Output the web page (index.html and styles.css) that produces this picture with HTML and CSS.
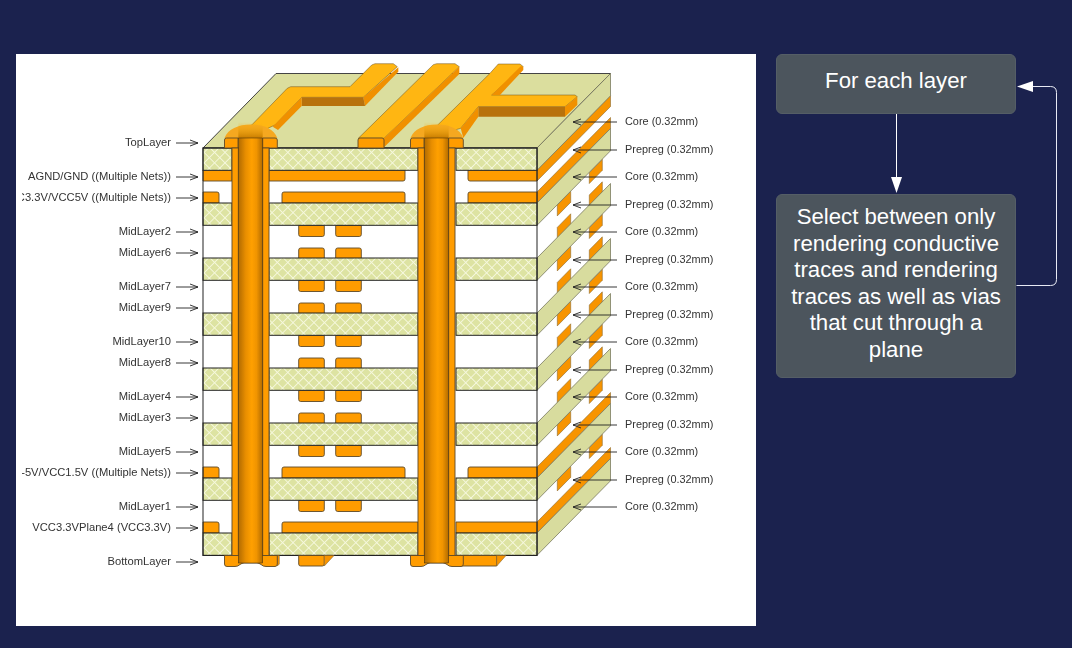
FILE: index.html
```html
<!DOCTYPE html>
<html lang="en">
<head>
<meta charset="utf-8">
<title>PCB layer rendering</title>
<link rel="stylesheet" href="styles.css">
</head>
<body>
<main class="page">
  <figure class="stack">
    <svg class="stack-svg" viewBox="16 54 740 572" width="740" height="572" xmlns="http://www.w3.org/2000/svg">
      <defs>
        <pattern id="hatch" width="7.4" height="7.4" patternUnits="userSpaceOnUse" patternTransform="rotate(45 0 0)">
          <rect width="7.4" height="7.4" fill="#dde3a2"/>
          <path d="M0 0H7.4M0 0V7.4" stroke="#f6f8de" stroke-width="1.8" fill="none"/>
        </pattern>
        <linearGradient id="barrel" x1="0" x2="1" y1="0" y2="0">
          <stop offset="0" stop-color="#b06a00"/>
          <stop offset="0.3" stop-color="#e88e00"/>
          <stop offset="0.55" stop-color="#ffa000"/>
          <stop offset="0.75" stop-color="#f09400"/>
          <stop offset="1" stop-color="#b06a00"/>
        </linearGradient>
        <linearGradient id="fade" x1="0" x2="0" y1="0" y2="1">
          <stop offset="0" stop-color="#ffb612" stop-opacity="0"/>
          <stop offset="1" stop-color="#c87c00"/>
        </linearGradient>
        <clipPath id="labelclip"><rect x="22" y="54" width="734" height="572"/></clipPath>
        <path id="pad-hang" class="copper" d="M0 0V9q0 2 2 2H23.6q2 0 2-2V0Z"/>
        <path id="pad-stand" class="copper" d="M0 11V2q0-2 2-2H23.6q2 0 2 2V11Z"/>
        <g id="pad-pair-hang">
          <use href="#pad-hang" x="298.7"/>
          <use href="#pad-hang" x="335.7"/>
        </g>
        <g id="pad-pair-stand">
          <use href="#pad-stand" x="298.7"/>
          <use href="#pad-stand" x="335.7"/>
        </g>
        <g id="side-pads">
          <polygon class="copper-side" points="557.3,-20.6 570.7,-34.2 570.7,-23.2 557.3,-9.6"/>
          <polygon class="copper-side" points="589.3,-53 602.3,-66.2 602.3,-55.2 589.3,-42"/>
        </g>
        <g id="side-pads-double">
          <use href="#side-pads" y="225.5"/>
          <use href="#side-pads" y="248"/>
        </g>
        <polygon id="side-strip" class="copper-side" points="537,0 610.5,-74.5 610.5,-63.5 537,11"/>
        <g id="core">
          <polygon class="core-side" points="537,148 610.5,73.5 610.5,95.8 537,170.3"/>
          <rect class="core-front" x="203" y="148" width="29" height="22.3" fill="url(#hatch)"/>
          <rect class="core-front" x="269" y="148" width="149" height="22.3" fill="url(#hatch)"/>
          <rect class="core-front" x="456" y="148" width="81" height="22.3" fill="url(#hatch)"/>
        </g>
        <g id="via">
          <path class="dome" d="M224.5 138C228 129 238 124.500 251 124.500C264 124.500 274 129 277.300 138Z"/>
          <path class="copper" d="M224.5 148V140q0-2 2-2H238V148Z"/>
          <path class="copper" d="M262.7 148V138H275q2.3 0 2.3 2V148Z"/>
          <rect x="238.300" y="122" width="24.400" height="16" fill="url(#fade)"/>
          <path class="copper" d="M224.500 555.500V564q0 2.500 2.500 2.500H235q3 0 5-2q2-1.500 4-1.500h13q2 0 4 1.500q2 2 5 2h9q2.300 0 2.300-2.500V555.500Z"/>
          <rect class="wall" x="232" y="148" width="6.300" height="407.500"/>
          <rect class="wall" x="262.700" y="148" width="6.300" height="407.500"/>
          <rect class="barrel-line" x="238.300" y="138" width="24.400" height="425" fill="url(#barrel)"/>
        </g>
        <path id="arrow-left-label" class="arrow" d="M176 0H198M190-3L198 0L190 3"/>
        <path id="arrow-right-label" class="arrow" d="M617 0H573M581-3L573 0L581 3"/>
      </defs>

      <rect class="sheet" x="16" y="54" width="740" height="572"/>

      <polygon class="surface" points="203,148 276,73.500 610.500,73.500 537,148"/>

      <use href="#side-strip" y="170"/>
      <use href="#side-strip" y="192"/>
      <use href="#side-strip" y="467"/>
      <use href="#side-strip" y="522"/>
      <use href="#side-pads-double"/>
      <use href="#side-pads-double" y="55"/>
      <use href="#side-pads-double" y="110"/>
      <use href="#side-pads-double" y="165"/>
      <use href="#side-pads" y="445.500"/>
      <use href="#side-pads" y="500.500"/>

      <path class="copper" d="M203 170H232V181H203Z"/>
      <path class="copper" d="M269 170H405V179q0 2-2 2H269Z"/>
      <path class="copper" d="M537 170V181H470q-2 0-2-2V170Z"/>
      <g id="lower-row">
        <path class="copper" d="M203 203V192H217q2 0 2 2V203Z"/>
        <path class="copper" d="M282 203V194q0-2 2-2H403q2 0 2 2V203Z"/>
        <path class="copper" d="M468 203V194q0-2 2-2H537V203Z"/>
      </g>
      <use href="#lower-row" y="275"/>
      <path class="copper" d="M203 533V522H217q2 0 2 2V533Z"/>
      <path class="copper" d="M282 533V524q0-2 2-2H418V533Z"/>
      <path class="copper" d="M456 522H537V533H456Z"/>

      <use href="#pad-pair-hang" y="225.500"/>
      <use href="#pad-pair-stand" y="248"/>
      <use href="#pad-pair-hang" y="280.500"/>
      <use href="#pad-pair-stand" y="303"/>
      <use href="#pad-pair-hang" y="335.500"/>
      <use href="#pad-pair-stand" y="358"/>
      <use href="#pad-pair-hang" y="390.500"/>
      <use href="#pad-pair-stand" y="413"/>
      <use href="#pad-pair-hang" y="445.500"/>
      <use href="#pad-pair-hang" y="500.500"/>

      <use href="#core"/>
      <use href="#core" y="55"/>
      <use href="#core" y="110"/>
      <use href="#core" y="165"/>
      <use href="#core" y="220"/>
      <use href="#core" y="275"/>
      <use href="#core" y="330"/>
      <use href="#core" y="385"/>
      <rect class="front-edge" x="203" y="148" width="334" height="407.500"/>

      <path class="copper" d="M298.700 555.500H324.300V564q0 2-2 2H300.700q-2 0-2-2Z"/>
      <polygon class="copper-side" points="324.300,555.500 334,555.500 324.300,566"/>
      <polygon class="copper-side" points="277.300,555.500 279.300,555.500 279.300,564 277.300,566"/>
      <path class="copper" d="M455 555.500H496.700V566H460Z"/>
      <polygon class="copper-side" points="496.700,566 506,555.500 496.700,555.500"/>

      <polygon class="trace-top" points="251.700,125 287.300,88.300 290.700,86.700 350,86.700 371.700,65 375,63.700 393.300,63.700 397.300,66.700 363.300,97.300 301.700,97.300 275,125 262,131"/>
      <polygon class="trace-side" points="363.300,97.300 398.300,67.300 398.300,71.700 365,106"/>
      <polygon class="trace-shade" points="301.700,97.300 363.300,97.300 365,106 301.700,106"/>
      <polygon class="trace-side" points="301.700,97.300 272.700,126.700 278,130 301.700,106"/>

      <polygon class="trace-top" points="358.300,138.300 433.300,64.700 436.700,63.700 455,63.700 459.300,66.700 384,138.300"/>
      <polygon class="trace-side" points="384,138.300 459.300,66.700 459.300,74 384,147.300"/>
      <path class="copper" d="M358 148V140q0-2 2-2H382q2 0 2 2V148Z"/>

      <polygon class="trace-top" points="437.700,125 490,73.300 498.300,64 520,64 523.300,66.700 491.700,95 575,95 577.300,96.700 565,106.700 478.300,106.700 460.700,128.300 448,132"/>
      <polygon class="trace-side" points="491.700,95 521,66 523.300,67.300 523.300,70 500,95"/>
      <polygon class="trace-side" points="565,106.700 577.300,96.700 577.300,105 565,116.700"/>
      <polygon class="trace-shade" points="478.300,106.700 565,106.700 565,116.700 478.300,116.700"/>
      <polygon class="trace-side" points="478.300,106.700 460.700,128.300 463.300,138 478.300,116.700"/>

      <use href="#via"/>
      <use href="#via" x="186"/>

      <g class="labels-left" clip-path="url(#labelclip)">
        <text x="171" y="146">TopLayer</text>
        <text x="171" y="180">AGND/GND ((Multiple Nets))</text>
        <text x="171" y="201">C3.3V/VCC5V ((Multiple Nets))</text>
        <text x="171" y="235">MidLayer2</text>
        <text x="171" y="256">MidLayer6</text>
        <text x="171" y="290">MidLayer7</text>
        <text x="171" y="311">MidLayer9</text>
        <text x="171" y="345">MidLayer10</text>
        <text x="171" y="366">MidLayer8</text>
        <text x="171" y="400">MidLayer4</text>
        <text x="171" y="421">MidLayer3</text>
        <text x="171" y="455">MidLayer5</text>
        <text x="171" y="476">-5V/VCC1.5V ((Multiple Nets))</text>
        <text x="171" y="510">MidLayer1</text>
        <text x="171" y="531">VCC3.3VPlane4 (VCC3.3V)</text>
        <text x="171" y="565">BottomLayer</text>
      </g>
      <g>
        <use href="#arrow-left-label" y="143"/>
        <use href="#arrow-left-label" y="177"/>
        <use href="#arrow-left-label" y="198"/>
        <use href="#arrow-left-label" y="232"/>
        <use href="#arrow-left-label" y="253"/>
        <use href="#arrow-left-label" y="287"/>
        <use href="#arrow-left-label" y="308"/>
        <use href="#arrow-left-label" y="342"/>
        <use href="#arrow-left-label" y="363"/>
        <use href="#arrow-left-label" y="397"/>
        <use href="#arrow-left-label" y="418"/>
        <use href="#arrow-left-label" y="452"/>
        <use href="#arrow-left-label" y="473"/>
        <use href="#arrow-left-label" y="507"/>
        <use href="#arrow-left-label" y="528"/>
        <use href="#arrow-left-label" y="562"/>
      </g>
      <g class="labels-right">
        <text x="625" y="125">Core (0.32mm)</text>
        <text x="625" y="153">Prepreg (0.32mm)</text>
        <text x="625" y="180">Core (0.32mm)</text>
        <text x="625" y="208">Prepreg (0.32mm)</text>
        <text x="625" y="235">Core (0.32mm)</text>
        <text x="625" y="263">Prepreg (0.32mm)</text>
        <text x="625" y="290">Core (0.32mm)</text>
        <text x="625" y="318">Prepreg (0.32mm)</text>
        <text x="625" y="345">Core (0.32mm)</text>
        <text x="625" y="373">Prepreg (0.32mm)</text>
        <text x="625" y="400">Core (0.32mm)</text>
        <text x="625" y="428">Prepreg (0.32mm)</text>
        <text x="625" y="455">Core (0.32mm)</text>
        <text x="625" y="483">Prepreg (0.32mm)</text>
        <text x="625" y="510">Core (0.32mm)</text>
      </g>
      <g>
        <use href="#arrow-right-label" y="122"/>
        <use href="#arrow-right-label" y="150"/>
        <use href="#arrow-right-label" y="177"/>
        <use href="#arrow-right-label" y="205"/>
        <use href="#arrow-right-label" y="232"/>
        <use href="#arrow-right-label" y="260"/>
        <use href="#arrow-right-label" y="287"/>
        <use href="#arrow-right-label" y="315"/>
        <use href="#arrow-right-label" y="342"/>
        <use href="#arrow-right-label" y="370"/>
        <use href="#arrow-right-label" y="397"/>
        <use href="#arrow-right-label" y="425"/>
        <use href="#arrow-right-label" y="452"/>
        <use href="#arrow-right-label" y="480"/>
        <use href="#arrow-right-label" y="507"/>
      </g>
    </svg>
  </figure>

  <section class="flow">
    <div class="step step-first">For each layer</div>
    <div class="step step-second">Select between only rendering conductive traces and rendering traces as well as vias that cut through a plane</div>
    <svg class="connectors" viewBox="776 54 296 324" width="296" height="324" xmlns="http://www.w3.org/2000/svg">
      <path class="link" d="M896.500 114V178"/>
      <polygon class="link-head" points="891,177 902,177 896.500,193"/>
      <path class="link link-back" d="M1016.500 285.500H1050.500q6 0 6-6V92.500q0-6-6-6H1032"/>
      <polygon class="link-head" points="1017,86.500 1033,81 1033,92"/>
    </svg>
  </section>
</main>
</body>
</html>
```

FILE: styles.css
```css
html, body {
  margin: 0;
  padding: 0;
}

body {
  background: #1b224e;
  width: 1072px;
  height: 648px;
  overflow: hidden;
  font-family: "Liberation Sans", Arial, sans-serif;
}

.page {
  display: flex;
  align-items: flex-start;
  gap: 20px;
  padding: 54px 0 0 16px;
}

.stack {
  margin: 0;
  flex: none;
  width: 740px;
  height: 572px;
}

.stack-svg {
  display: block;
  filter: blur(0.35px);
}

.sheet { fill: #ffffff; }

.surface {
  fill: #dbde9e;
  stroke: #444;
  stroke-width: 1;
}

.core-side {
  fill: #d8dc9e;
  stroke: #7a7a60;
  stroke-width: 0.8;
}

.core-front {
  stroke: #222;
  stroke-width: 1;
}

.front-edge {
  fill: none;
  stroke: #222;
  stroke-width: 1;
}

.copper {
  fill: #ff9c00;
  stroke: #5e4a28;
  stroke-width: 0.9;
}

.copper-side {
  fill: #f79400;
  stroke: #8a6a30;
  stroke-width: 0.6;
}

.wall {
  fill: #ff9c00;
  stroke: #5e4a28;
  stroke-width: 0.9;
}

.barrel-line {
  stroke: #3a2a10;
  stroke-width: 0.5;
}

.dome { fill: #f5a820; }

.trace-top {
  fill: #ffb612;
  stroke: #6a5020;
  stroke-width: 0.5;
}

.trace-side { fill: #f09000; }

.trace-shade { fill: #b8720c; }

.arrow {
  fill: none;
  stroke: #222;
  stroke-width: 0.9;
}

.labels-left,
.labels-right {
  font-family: "Liberation Sans", Arial, sans-serif;
  fill: #333;
}

.labels-left {
  font-size: 11.200px;
  text-anchor: end;
}

.labels-right { font-size: 10.900px; }

.flow {
  position: relative;
  flex: none;
  width: 240px;
  display: flex;
  flex-direction: column;
  gap: 80px;
}

.step {
  box-sizing: border-box;
  width: 240px;
  background: #4c555d;
  border: 1px solid #555e66;
  border-radius: 6px;
  color: #ffffff;
  font-size: 22.200px;
  line-height: 26.600px;
  text-align: center;
}

.step-first {
  height: 60px;
  padding-top: 13px;
}

.step-second {
  height: 184px;
  padding: 9px 8px 0;
}

.connectors {
  position: absolute;
  left: 0;
  top: 0;
  overflow: visible;
  pointer-events: none;
}

.link {
  fill: none;
  stroke: #ffffff;
  stroke-width: 1;
}

.link-back { stroke: #e8eaf4; }

.link-head { fill: #ffffff; }
```
